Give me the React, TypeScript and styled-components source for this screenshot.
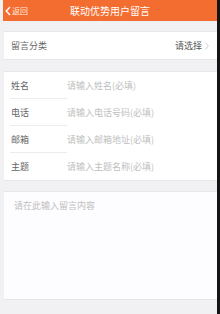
import React from 'react'
import styled, { createGlobalStyle } from 'styled-components'

const Global = createGlobalStyle`
    html, body {
        margin: 0;
        padding: 0;
        background: #f1f1f3;
    }
    body {
        font-family: "Noto Sans CJK SC", "Liberation Sans", sans-serif;
    }
`

const Frame = styled.div`
    box-sizing: border-box;
    width: 220px;
    min-height: 314px;
    padding-left: 3px;
    border-right: 3px solid #141414;
    background: #f1f1f3;
    display: flex;
    flex-direction: column;
`

const Header = styled.div`
    height: 21px;
    background: #f46d30;
    display: flex;
    align-items: center;
    position: relative;
    color: #fff;
`

const Back = styled.div`
    display: flex;
    align-items: center;
    gap: 1px;
    padding-left: 2px;
    font-size: 8px;
    color: #ffe9dd;
    svg { display: block; }
`

const Title = styled.div`
    position: absolute;
    left: 0;
    right: 0;
    text-align: center;
    font-size: 10px;
    pointer-events: none;
`

const Panel = styled.div<{ $top: number }>`
    margin-top: ${p => p.$top}px;
    margin-left: 1px;
    background: #fff;
    border-top: 1px solid #e6e6e8;
    border-bottom: 1px solid #e6e6e8;
`

const SelectRow = styled.div`
    height: 27px;
    display: flex;
    align-items: center;
    justify-content: space-between;
    padding: 0 8px 0 7px;
    font-size: 9px;
    color: #666;
`

const Choose = styled.div`
    display: flex;
    align-items: center;
    gap: 3px;
    color: #555;
`

const Row = styled.div`
    height: 27px;
    display: flex;
    align-items: stretch;
    font-size: 9px;
`

const Label = styled.div<{ $last?: boolean }>`
    width: 56px;
    margin-left: 6px;
    padding-left: 1px;
    display: flex;
    align-items: center;
    color: #666;
    border-bottom: ${p => (p.$last ? 'none' : '1px solid #ececee')};
`

const Placeholder = styled.div`
    display: flex;
    align-items: center;
    color: #c0c0c0;
`

const TextArea = styled.div`
    height: 107px;
    padding: 7px 10px;
    box-sizing: border-box;
    font-size: 9px;
    color: #c0c0c0;
    background: #fdfcfe;
`

const fields = [
    { label: '姓名', hint: '请输入姓名(必填)' },
    { label: '电话', hint: '请输入电话号码(必填)' },
    { label: '邮箱', hint: '请输入邮箱地址(必填)' },
    { label: '主题', hint: '请输入主题名称(必填)' },
]

const App = () => {
    return (
        <Frame>
            <Global />
            <Header>
                <Back>
                    <svg width="6" height="10" viewBox="0 0 6 10">
                        <path d="M5 1 L1.2 5 L5 9" fill="none" stroke="#fff" strokeWidth="1.4" />
                    </svg>
                    <span>返回</span>
                </Back>
                <Title>联动优势用户留言</Title>
            </Header>

            <Panel $top={10}>
                <SelectRow>
                    <span>留言分类</span>
                    <Choose>
                        <span>请选择</span>
                        <svg width="4" height="8" viewBox="0 0 4 8">
                            <path d="M0.5 0.5 L3.3 4 L0.5 7.5" fill="none" stroke="#c8c8c8" strokeWidth="0.9" />
                        </svg>
                    </Choose>
                </SelectRow>
            </Panel>

            <Panel $top={11}>
                {fields.map((f, i) => (
                    <Row key={f.label}>
                        <Label $last={i === fields.length - 1}>{f.label}</Label>
                        <Placeholder>{f.hint}</Placeholder>
                    </Row>
                ))}
            </Panel>

            <Panel $top={10}>
                <TextArea>请在此输入留言内容</TextArea>
            </Panel>
        </Frame>
    )
}

export default App
